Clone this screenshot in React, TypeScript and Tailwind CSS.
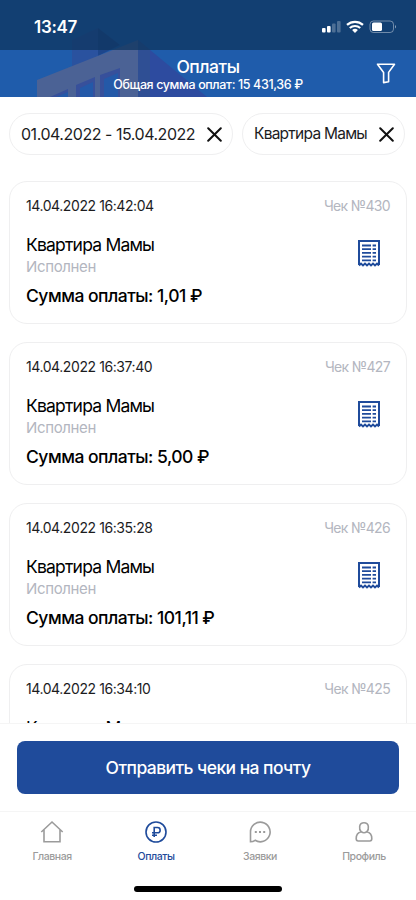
import type { ReactNode } from "react";

interface Payment {
  date: string;
  receipt: string;
  amount?: string;
}

const PAYMENTS: Payment[] = [
  { date: "14.04.2022 16:42:04", receipt: "430", amount: "1,01" },
  { date: "14.04.2022 16:37:40", receipt: "427", amount: "5,00" },
  { date: "14.04.2022 16:35:28", receipt: "426", amount: "101,11" },
  { date: "14.04.2022 16:34:10", receipt: "425" },
];

function Building() {
  return (
    <svg className="absolute left-0 top-0" width="416" height="97" viewBox="0 0 416 97" aria-hidden="true">
      <path d="M72 40 98 28V56L72 67Z" fill="#2a529f" />
      <path d="M98 28 120 45 98 56Z" fill="#1d468c" />
      <path d="M138 40 207 97H138Z" fill="#2d4b9f" />
      <path d="M138 40 150 50V97H138Z" fill="#2f4f94" />
      <path d="M37 80 138 40V97H37Z" fill="#4b6295" />
      <path d="M50 97 68 89V97ZM76 97V85L95 77V97ZM100 97V75L120 68V97Z" fill="#37509b" />
      <path d="M56 97 68 92V97ZM80 97V88L93 82V97ZM104 97V79L118 73V97Z" fill="#2459a8" />
    </svg>
  );
}

function StatusBar() {
  return (
    <div className="relative flex h-[50px] items-center justify-between bg-[#0f355f]/75 pl-[34px] pr-[19px] pt-1 text-white">
      <span className="text-[17px] font-semibold leading-5 tracking-[-0.3px]">13:47</span>
      <svg width="76" height="14" viewBox="0 0 76 14" fill="#fff" aria-hidden="true">
        <rect x="1" y="8" width="3.6" height="4.5" rx="1" />
        <rect x="6" y="6" width="3.6" height="6.5" rx="1" />
        <rect x="11" y="3.5" width="3.6" height="9" rx="1" opacity=".25" />
        <rect x="16" y="1" width="3.6" height="11.5" rx="1" opacity=".25" />
        <path d="M26 4.9a12 12 0 0 1 16 0M28.8 8a7.8 7.8 0 0 1 10.4 0" fill="none" stroke="#fff" strokeWidth="2.2" />
        <path d="m34 13-2.9-3a4.5 4.5 0 0 1 5.8 0Z" />
        <rect x="49" y="1" width="23.5" height="11.5" rx="3.4" fill="none" stroke="#fff" opacity=".4" />
        <rect x="51" y="2.5" width="10" height="8.5" rx="1.6" />
        <path d="M74 5v3.6c1.4-.6 1.4-3 0-3.6Z" opacity=".5" />
      </svg>
    </div>
  );
}

function CloseIcon() {
  return (
    <svg className="shrink-0" width="15" height="15" viewBox="0 0 15 15" stroke="#111" strokeWidth="2" strokeLinecap="round" aria-hidden="true">
      <path d="m1.2 1.2 12.6 12.6M13.8 1.2 1.2 13.8" />
    </svg>
  );
}

function Chip({ children, className }: { children: ReactNode; className: string }) {
  return (
    <div className={`flex h-[42px] items-center justify-between rounded-full border border-[#efeff0] pl-[11px] text-[#1c1c1e] ${className}`}>
      <span className="whitespace-nowrap">{children}</span>
      <CloseIcon />
    </div>
  );
}

function ReceiptIcon() {
  return (
    <svg width="22" height="27" viewBox="0 0 22 27" fill="none" stroke="#1f4b9b" aria-hidden="true">
      <path d="M1 25V1H21V25" strokeWidth="2" />
      <path d="m1 25.4 2-1.8 2 1.8 2-1.8 2 1.8 2-1.8 2 1.8 2-1.8 2 1.8 2-1.8 2 1.8" strokeWidth="2" />
      <path d="M4 5.5h9M4 9.2h9M4 12.9h9M4 16.6h9M4 20.3h9M14.6 5.5H18M14.6 9.2H18M14.6 12.9H18M14.6 16.6H18M14.6 20.3H18" strokeWidth="1.8" />
    </svg>
  );
}

function PaymentCard({ date, receipt, amount }: Payment) {
  return (
    <article className="h-[143px] shrink-0 rounded-[18px] border border-[#efeff0] px-4 pt-[14px]">
      <div className="flex justify-between text-[14px] leading-5">
        <span className="tracking-[-0.42px] text-[#1c1c1e]">{date}</span>
        <span className="tracking-[-0.65px] text-[#b3b6c0]">Чек №{receipt}</span>
      </div>
      <div className="flex justify-between pr-[10px] pt-4">
        <div>
          <h2 className="text-[17.5px] leading-[25px] tracking-[-0.8px] text-black">Квартира Мамы</h2>
          {amount && <p className="text-[15px] leading-5 tracking-[-0.35px] text-[#b3b6c0]">Исполнен</p>}
        </div>
        {amount && (
          <div className="pt-2">
            <ReceiptIcon />
          </div>
        )}
      </div>
      {amount && (
        <p className="pt-[7px] text-[17.5px] font-medium leading-6 tracking-[-0.5px] text-black">
          Сумма оплаты: {amount} ₽
        </p>
      )}
    </article>
  );
}

function Tab({ label, active = false, children }: { label: string; active?: boolean; children: ReactNode }) {
  return (
    <a className={`flex flex-1 flex-col items-center ${active ? "text-[#1f4b9b]" : "text-[#9b9b9b]"}`}>
      <svg width="24" height="24" viewBox="0 0 24 24" fill="none" stroke="currentColor" strokeWidth="1.6" aria-hidden="true">
        {children}
      </svg>
      <span className="pt-[5px] text-[10.5px] font-medium leading-4 tracking-[-0.45px]">{label}</span>
    </a>
  );
}

export default function App() {
  return (
    <div className="flex h-[900px] w-[416px] flex-col overflow-hidden bg-white font-['Inter',sans-serif]">
      <header className="relative h-[97px] shrink-0 bg-[#1f5cab] text-white">
        <Building />
        <StatusBar />
        <div className="relative flex h-[47px] flex-col items-center pt-[6px]">
          <h1 className="text-[17.5px] font-medium leading-[21px] tracking-[-0.45px]">Оплаты</h1>
          <p className="text-[12.5px] font-medium leading-4 tracking-[-0.38px]">Общая сумма оплат: 15 431,36 ₽</p>
          <svg className="absolute right-[20px] top-[13px]" width="20" height="21" viewBox="0 0 20 21" fill="none" stroke="#fff" strokeWidth="1.6" strokeLinejoin="round" aria-label="Фильтр">
            <path d="M1.5 1.2h17L12.6 9.4v9.4l-5 .8V9.4Z" />
          </svg>
        </div>
      </header>

      <div className="flex shrink-0 gap-[9px] px-[9px] pt-4">
        <Chip className="w-[224px] pr-[10px] text-[16px] tracking-[-0.47px]">01.04.2022 - 15.04.2022</Chip>
        <Chip className="w-[163px] pr-[10px] text-[15.5px] tracking-[-0.75px]">Квартира Мамы</Chip>
      </div>

      <main className="flex min-h-0 flex-1 flex-col gap-[18px] overflow-hidden px-[9px] pt-[26px]">
        {PAYMENTS.map((payment) => (
          <PaymentCard key={payment.receipt} {...payment} />
        ))}
      </main>

      <div className="h-[88px] shrink-0 border-t border-[#f5f5f5] px-[17px] pt-[17px]">
        <button className="h-[53px] w-full rounded-[8px] bg-[#1f4b9b] pt-[2px] text-[17.5px] font-medium tracking-[-0.57px] text-white">
          Отправить чеки на почту
        </button>
      </div>

      <nav className="h-[89px] shrink-0 border-t border-[#f5f5f5] pt-2">
        <div className="flex">
          <Tab label="Главная">
            <path d="M1.3 12 12 2l10.7 10M4 9.9v11.8h16V9.9" />
          </Tab>
          <Tab label="Оплаты" active>
            <circle cx="12" cy="12" r="10" />
            <path d="M10.2 17V7.5h3.3a2.6 2.6 0 0 1 0 5.3H8M8 15.2h5" />
          </Tab>
          <Tab label="Заявки">
            <path d="M2.5 21.8V12a9.8 9.8 0 1 1 4.6 8.3c-1.300.9-2.800 1.500-4.600 1.500Z" />
            <path d="M6.8 12h2M11 12h2M15.2 12h2" strokeWidth="2" />
          </Tab>
          <Tab label="Профиль">
            <path d="M9.200 11.700C6.700 9.200 6.700 2.800 12 2.800s5.300 6.400 2.800 8.900c3.200.7 5 3.400 5 6.800 0 1.700-.6 2.500-2 2.500H6.200c-1.400 0-2-.8-2-2.500 0-3.400 1.800-6.100 5-6.800Z" />
            <path d="M9.200 11.700c1.600 1.200 4 1.200 5.600 0" />
          </Tab>
        </div>
        <div className="mx-auto mt-[21px] h-[5.5px] w-[148px] rounded-full bg-black" />
      </nav>
    </div>
  );
}
